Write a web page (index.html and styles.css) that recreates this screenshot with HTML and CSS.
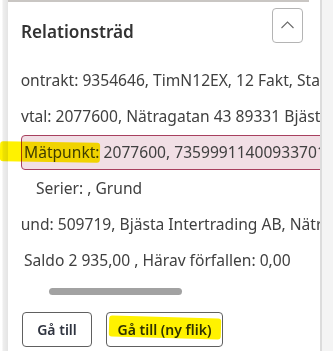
FILE: index.html
```html
<!DOCTYPE html>
<html lang="sv">
<head>
<meta charset="utf-8">
<title>Relationsträd</title>
<link rel="stylesheet" href="styles.css">
</head>
<body>
<div class="page">
  <div class="gutter"></div>
  <div class="panel">
    <div class="topline"></div>
    <div class="header">
      <h2 class="title">Relationsträd</h2>
      <button class="collapse" aria-label="Fäll ihop">
        <svg width="13" height="8" viewBox="0 0 13 8"><path d="M0.5 7 L6.5 1 L12.5 7" fill="none" stroke="#6a6a6a" stroke-width="1.1"/></svg>
      </button>
    </div>
    <div class="tree">
      <div class="row clip-k">Kontrakt: 9354646, TimN12EX, 12 Fakt, Status: Aktiv</div>
      <div class="row clip-a">Avtal: 2077600, Nätragatan 43 89331 Bjästa</div>
      <div class="row sel"><div class="selbox">Mätpunkt: 2077600, 735999114009337012</div></div>
      <div class="row l3">Serier: , Grund</div>
      <div class="row clip-k">Kund: 509719, Bjästa Intertrading AB, Nätragatan</div>
      <div class="row l2">Saldo 2 935,00 , Härav förfallen: 0,00</div>
    </div>
    <div class="hscroll"><div class="thumb"></div></div>
    <div class="actions">
      <button class="btn btn-go">Gå till</button>
      <button class="btn btn-new">Gå till (ny flik)</button>
    </div>
  </div>
  <div class="side"></div>
</div>
<div class="marker marker-1"></div>
<div class="marker marker-2"></div>
</body>
</html>
```

FILE: styles.css
```css
html, body {
  margin: 0;
  padding: 0;
  background: #ffffff;
  width: 333px;
  height: 351px;
  overflow: hidden;
  font-family: "Noto Sans", "Open Sans", sans-serif;
  color: #404040;
}

.page {
  display: flex;
  height: 351px;
}

.gutter {
  width: 8px;
  flex: none;
  background: linear-gradient(to right, #ffffff 0px, #ffffff 2px, #eeeeee 3px, #e4e4e4 8px);
}

.panel {
  width: 312px;
  flex: none;
  background: #ffffff;
  overflow: hidden;
}

.topline {
  width: 301px;
  height: 2px;
  background: #c9c6c3;
}

.header {
  display: flex;
  justify-content: space-between;
  align-items: flex-start;
  padding: 6px 17px 0 13px;
  height: 35px;
}

.title {
  margin: 13px 0 0 0;
  font-size: 17.2px;
  font-weight: 600;
  line-height: 22px;
  color: #333333;
}

.collapse {
  width: 31px;
  height: 35px;
  padding: 0;
  margin: 0;
  border: 1px solid #b4b4b4;
  border-radius: 4px;
  background: #ffffff;
  display: flex;
  align-items: center;
  justify-content: center;
}

.collapse svg {
  display: block;
  margin-top: -1px;
}

.tree {
  margin-top: 19px;
  margin-left: 13px;
  overflow: hidden;
  font-size: 15.6px;
}

.row {
  height: 36px;
  line-height: 36px;
  white-space: nowrap;
}

.clip-k { text-indent: -10px; }
.clip-a { text-indent: -10px; }
.l2 { padding-left: 3px; }
.l3 { padding-left: 15px; }

.row.sel {
  display: flex;
  align-items: center;
}

.selbox {
  height: 33px;
  line-height: 33px;
  width: 340px;
  flex: none;
  padding-left: 2px;
  border: 1px solid #a8405f;
  border-radius: 4px;
  background: #f1dfe5;
}

.hscroll {
  margin-top: 10px;
  padding-left: 41px;
}

.thumb {
  width: 133px;
  height: 7px;
  border-radius: 4px;
  background: #a2a2a2;
}

.actions {
  display: flex;
  gap: 14px;
  margin-top: 17px;
  padding-left: 14px;
}

.btn {
  height: 35px;
  border: 1px solid #606060;
  border-radius: 4px;
  background: #ffffff;
  font-family: "Noto Sans", "Open Sans", sans-serif;
  font-size: 14px;
  font-weight: 600;
  color: #2f3440;
  padding: 0;
}

.btn-go { width: 70px; }
.btn-new { width: 117px; }

.side {
  flex: 1;
  background: #f4f4f4;
  border-left: 2px solid #dcdcdc;
}

.marker {
  position: absolute;
  background: #fff200;
  mix-blend-mode: multiply;
  border-radius: 3px;
}

.marker-1 {
  left: 0;
  top: 142px;
  width: 100px;
  height: 20px;
  transform: rotate(1deg);
}

.marker-2 {
  left: 109px;
  top: 317px;
  width: 112px;
  height: 21px;
  transform: rotate(1.5deg);
}
```
